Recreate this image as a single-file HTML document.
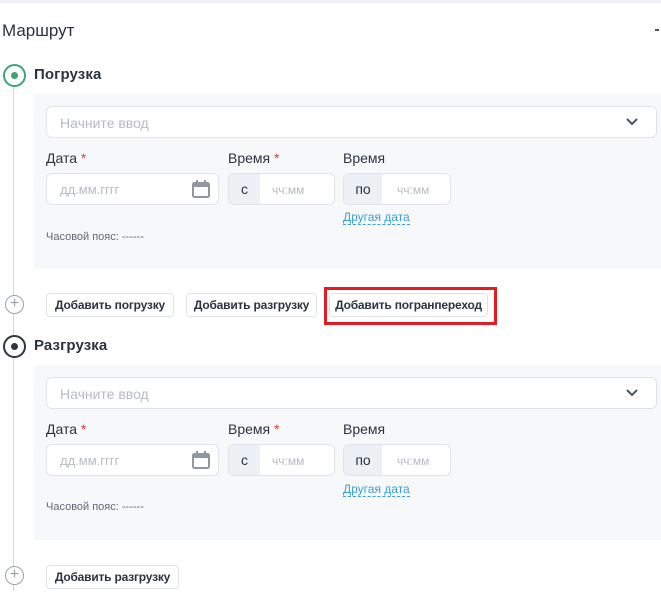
<!DOCTYPE html><html><head><meta charset="utf-8"><style>
*{box-sizing:border-box;margin:0;padding:0}
body{width:661px;height:603px;background:#fff;font-family:"Liberation Sans",sans-serif;position:relative;overflow:hidden;color:#2b3340}
.a{position:absolute}
.bar{left:0;top:0;width:661px;height:3px;background:#eef0f3}
.t{font-size:17px;color:#2b3340}
.h{font-size:15px;font-weight:bold;color:#2b3340;letter-spacing:0.1px}
.line{left:13px;width:1px;background:#d3d7dc}
.circ{width:23px;height:23px;border-radius:50%;border:2px solid}
.dot{position:absolute;left:6px;top:6px;width:7px;height:7px;border-radius:50%}
.panel{left:34px;width:627px;background:#f7f8fa}
.inp{background:#fff;border:1px solid #e0e4e9;border-radius:6px;height:32px}
.ph{color:#b7bbc1;font-size:14px;position:absolute;top:8px}
.lbl{font-size:14px;color:#2b3340}
.lbl b{color:#e23b3b;font-weight:normal}
.pre{position:absolute;left:0;top:0;bottom:0;background:#edf0f4;border-radius:6px 0 0 6px;font-size:14px;text-align:center;line-height:30px;color:#2b3340}
.link{font-size:12px;color:#3a9fd6;border-bottom:1px dashed #3a9fd6;line-height:13px}
.tz{font-size:11px;color:#5e6a7a}
.btn{height:24px;border:1px solid #dfe3e8;border-radius:4px;background:#fff;font-size:12px;font-weight:bold;color:#2b3340;line-height:22px;text-align:center;letter-spacing:-0.2px}
.plus{width:19px;height:19px;border-radius:50%;border:1.5px solid #9aa1ab;color:#9aa1ab;font-size:16px;line-height:15px;text-align:center;background:#fff}
</style></head><body>
<div class="a bar"></div>
<div class="a t" style="left:2px;top:21px">Маршрут</div>
<div class="a" style="left:655px;top:29px;width:4px;height:1.5px;background:#555"></div>
<div class="a line" style="top:86px;height:505px"></div>

<div class="a circ" style="left:3px;top:64px;border-color:#3aa76d;background:#fff"><div class="dot" style="background:#3aa76d"></div></div>
<div class="a h" style="left:34px;top:66px">Погрузка</div>

<div class="a panel" style="top:94px;height:175px"></div>
<div class="a inp" style="left:46px;top:106px;width:611px"><span class="ph" style="left:13px">Начните ввод</span>
<svg class="a" style="left:578px;top:9px" width="14" height="12" viewBox="0 0 14 12"><path d="M2 3l5 5 5-5" stroke="#4a5361" stroke-width="2" fill="none"/></svg></div>
<div class="a lbl" style="left:46px;top:150px">Дата <b>*</b></div>
<div class="a lbl" style="left:228px;top:150px">Время <b>*</b></div>
<div class="a lbl" style="left:343px;top:150px">Время</div>
<div class="a inp" style="left:46px;top:173px;width:173px"><span class="ph" style="left:13px;font-size:13px">дд.мм.гггг</span>
<svg class="a" style="left:144px;top:5px" width="20" height="20" viewBox="0 0 20 20"><rect x="2" y="4" width="16" height="14" rx="1.5" fill="none" stroke="#8e97a3" stroke-width="2"/><rect x="2" y="4" width="16" height="4" fill="#8e97a3"/><rect x="5" y="1" width="2" height="4" fill="#8e97a3"/><rect x="13" y="1" width="2" height="4" fill="#8e97a3"/></svg></div>
<div class="a inp" style="left:228px;top:173px;width:107px"><div class="pre" style="width:31px">с</div><span class="ph" style="left:43px;font-size:12px;top:9px">чч:мм</span></div>
<div class="a inp" style="left:343px;top:173px;width:108px"><div class="pre" style="width:38px">по</div><span class="ph" style="left:53px;font-size:12px;top:9px">чч:мм</span></div>
<div class="a link" style="left:343px;top:211px">Другая дата</div>
<div class="a tz" style="left:46px;top:231px">Часовой пояс: ------</div>

<div class="a plus" style="left:5px;top:295px">+</div>
<div class="a btn" style="left:46px;top:293px;width:128px">Добавить погрузку</div>
<div class="a btn" style="left:186px;top:293px;width:131px">Добавить разгрузку</div>
<div class="a btn" style="left:329px;top:293px;width:159px">Добавить погранпереход</div>
<div class="a" style="left:324px;top:287px;width:173px;height:38px;border:3px solid #e31b23"></div>

<div class="a circ" style="left:3px;top:335px;border-color:#2f3542;background:#fff"><div class="dot" style="background:#2f3542"></div></div>
<div class="a h" style="left:34px;top:337px">Разгрузка</div>

<div class="a panel" style="top:365px;height:175px"></div>
<div class="a inp" style="left:46px;top:377px;width:611px"><span class="ph" style="left:13px">Начните ввод</span>
<svg class="a" style="left:578px;top:9px" width="14" height="12" viewBox="0 0 14 12"><path d="M2 3l5 5 5-5" stroke="#4a5361" stroke-width="2" fill="none"/></svg></div>
<div class="a lbl" style="left:46px;top:421px">Дата <b>*</b></div>
<div class="a lbl" style="left:228px;top:421px">Время <b>*</b></div>
<div class="a lbl" style="left:343px;top:421px">Время</div>
<div class="a inp" style="left:46px;top:444px;width:173px"><span class="ph" style="left:13px;font-size:13px">дд.мм.гггг</span>
<svg class="a" style="left:144px;top:5px" width="20" height="20" viewBox="0 0 20 20"><rect x="2" y="4" width="16" height="14" rx="1.5" fill="none" stroke="#8e97a3" stroke-width="2"/><rect x="2" y="4" width="16" height="4" fill="#8e97a3"/><rect x="5" y="1" width="2" height="4" fill="#8e97a3"/><rect x="13" y="1" width="2" height="4" fill="#8e97a3"/></svg></div>
<div class="a inp" style="left:228px;top:444px;width:107px"><div class="pre" style="width:31px">с</div><span class="ph" style="left:43px;font-size:12px;top:9px">чч:мм</span></div>
<div class="a inp" style="left:343px;top:444px;width:108px"><div class="pre" style="width:38px">по</div><span class="ph" style="left:53px;font-size:12px;top:9px">чч:мм</span></div>
<div class="a link" style="left:343px;top:483px">Другая дата</div>
<div class="a tz" style="left:46px;top:501px">Часовой пояс: ------</div>

<div class="a plus" style="left:5px;top:566px">+</div>
<div class="a btn" style="left:46px;top:565px;width:133px">Добавить разгрузку</div>
</body></html>
